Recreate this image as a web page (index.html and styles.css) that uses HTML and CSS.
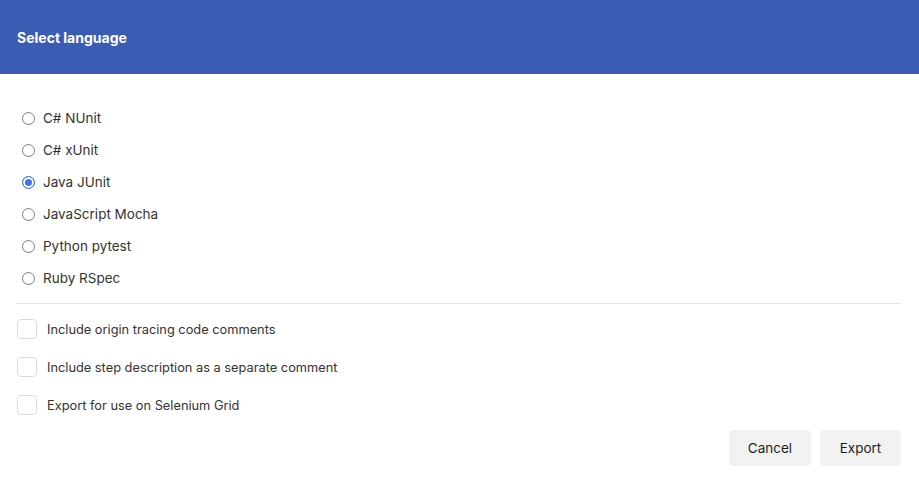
FILE: index.html
```html
<!DOCTYPE html>
<html>
<head>
<meta charset="utf-8">
<link rel="stylesheet" href="styles.css">
</head>
<body>
<div class="dialog">
  <header class="header"><h1 class="title">Select language</h1></header>
  <main class="content">
    <div class="radios">
      <label class="radio-row"><input type="radio" name="lang" class="radio"><span>C# NUnit</span></label>
      <label class="radio-row"><input type="radio" name="lang" class="radio"><span>C# xUnit</span></label>
      <label class="radio-row"><input type="radio" name="lang" class="radio" checked><span>Java JUnit</span></label>
      <label class="radio-row"><input type="radio" name="lang" class="radio"><span>JavaScript Mocha</span></label>
      <label class="radio-row"><input type="radio" name="lang" class="radio"><span>Python pytest</span></label>
      <label class="radio-row"><input type="radio" name="lang" class="radio"><span>Ruby RSpec</span></label>
    </div>
    <hr class="sep">
    <div class="checks">
      <label class="check-row"><input type="checkbox" class="check"><span>Include origin tracing code comments</span></label>
      <label class="check-row"><input type="checkbox" class="check"><span>Include step description as a separate comment</span></label>
      <label class="check-row"><input type="checkbox" class="check"><span>Export for use on Selenium Grid</span></label>
    </div>
    <div class="actions">
      <button class="btn">Cancel</button>
      <button class="btn">Export</button>
    </div>
  </main>
</div>
</body>
</html>
```
FILE: styles.css
```css
* { box-sizing: border-box; }
html, body { margin: 0; padding: 0; background: #fff; }
body { font-family: Inter, "Noto Sans", "Liberation Sans", sans-serif; color: #333; }
.header {
  height: 74px;
  background: #3a5db3;
  display: flex;
  align-items: center;
  padding-left: 17px;
}
.title {
  margin: 0;
  color: #fff;
  font-size: 14px;
  font-weight: 700;
  letter-spacing: 0;
}
.content { padding: 28px 18px 0 17px; }
.radios { display: flex; flex-direction: column; }
.radio-row {
  height: 32px;
  display: flex;
  align-items: center;
  font-size: 13.5px;
  color: #333;
}
.radio {
  appearance: none;
  -webkit-appearance: none;
  width: 13px;
  height: 13px;
  margin: 0 8px 0 5px;
  border: 1px solid #7a7a7a;
  border-radius: 50%;
  background: #fff;
}
.radio:checked {
  border: 1.5px solid #3b74ec;
  background: #3b74ec;
  box-shadow: inset 0 0 0 2px #fff;
}
.sep {
  margin: 9px 0 0 0;
  border: 0;
  border-top: 1px solid #e2e2e2;
  height: 0;
}
.checks { display: flex; flex-direction: column; padding-top: 6px; }
.check-row {
  height: 38px;
  display: flex;
  align-items: center;
  font-size: 12.8px;
  color: #333;
}
.check {
  appearance: none;
  -webkit-appearance: none;
  width: 20px;
  height: 20px;
  margin: 0 10px 0 0;
  border: 1px solid #dcdcdc;
  border-radius: 4px;
  background: #fff;
}
.actions {
  display: flex;
  justify-content: flex-end;
  gap: 9px;
  margin-top: 6px;
}
.btn {
  height: 36px;
  width: 82px;
  border: 0;
  border-radius: 4px;
  background: #f2f2f2;
  font-family: inherit;
  font-size: 13.5px;
  color: #1e1e1e;
}
.btn + .btn { width: 81px; }
```
